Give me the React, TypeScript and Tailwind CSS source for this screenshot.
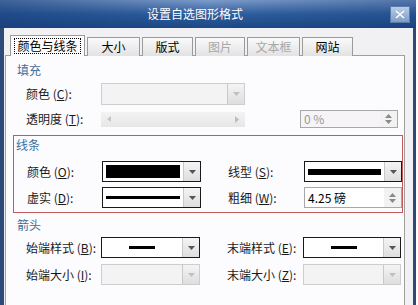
import React from 'react';

const font = { fontFamily: '"Noto Sans CJK SC", "Noto Sans", sans-serif' };

function Arrow({ disabled }: { disabled?: boolean }) {
  return (
    <div className="flex h-full w-[17px] items-center justify-center border-l border-[#c8c8c8] bg-gradient-to-b from-[#f4f4f4] to-[#dedede]">
      <svg width="7" height="4" viewBox="0 0 7 4">
        <path d="M0 0h7L3.5 4z" fill={disabled ? '#c0c0c0' : '#555'} />
      </svg>
    </div>
  );
}

function Spin() {
  return (
    <div className="flex h-full w-[17px] flex-col items-center justify-center gap-[2px] bg-[#f2f2f2]">
      <svg width="7" height="4" viewBox="0 0 7 4">
        <path d="M0 4h7L3.5 0z" fill="#8a8a8a" />
      </svg>
      <svg width="7" height="4" viewBox="0 0 7 4">
        <path d="M0 0h7L3.5 4z" fill="#8a8a8a" />
      </svg>
    </div>
  );
}

function Combo({ w, h, children, disabled }: { w: string; h: string; children?: React.ReactNode; disabled?: boolean }) {
  return (
    <div
      className={`flex ${w} ${h} items-stretch border ${
        disabled ? 'border-[#cdcdcd] bg-[#f3f3f3]' : 'border-[#1a1a1a] bg-white'
      }`}
    >
      <div className="flex flex-1 items-center px-[3px]">{children}</div>
      <Arrow disabled={disabled} />
    </div>
  );
}

function Label({ text, k, w }: { text: string; k: string; w: string }) {
  return (
    <div className={`${w} shrink-0 text-[12px] leading-[16px] text-[#1a1a1a]`}>
      {text} (<span className="underline">{k}</span>):
    </div>
  );
}

function Heading({ children }: { children: React.ReactNode }) {
  return <div className="text-[12px] leading-[16px] text-[#3d6f9c]">{children}</div>;
}

export default function App() {
  const tabs = [
    { t: '大小', w: 'w-[53px]' },
    { t: '版式', w: 'w-[51px]' },
    { t: '图片', w: 'w-[50px]', dis: true },
    { t: '文本框', w: 'w-[53px]', dis: true },
    { t: '网站', w: 'w-[51px]' },
  ];

  return (
    <div className="flex h-[305px] w-[418px] bg-white" style={font}>
      <div className="flex w-[416px] flex-col">
        {/* title bar */}
        <div className="relative flex h-[28px] shrink-0 items-center bg-gradient-to-b from-[#7d9ccb] via-[#2f5f9f] to-[#1c4886]">
          <div className="absolute inset-0 bg-gradient-to-r from-[#163c78]/60 via-transparent to-[#163c78]/40" />
          <div className="relative ml-[147px] text-[12px] leading-[16px] text-white">设置自选图形格式</div>
          <div className="relative ml-auto mr-[6px] flex h-[17px] w-[20px] items-center justify-center border border-[#5b7aa8] bg-gradient-to-b from-[#b9cde6] to-[#7e9cc6]">
            <svg width="10" height="9" viewBox="0 0 10 9">
              <path d="M1 1l8 7M9 1L1 8" stroke="white" strokeWidth="1.6" />
            </svg>
          </div>
        </div>

        <div className="flex flex-1">
          <div className="w-[4px] bg-[#2c4b78]" />
          <div className="flex flex-1 flex-col bg-[#f1f0f3] pt-[7px]">
            {/* tabs */}
            <div className="relative z-10 flex h-[21px] items-end gap-[2px] pl-[6px]">
              <div className="flex h-[21px] w-[75px] items-start justify-center border border-b-0 border-[#9a9a9a] bg-[#fcfbfd] pt-[2px]">
                <span className="border border-dotted border-black px-[2px] text-[12px] leading-[14px] text-black">
                  颜色与线条
                </span>
              </div>
              {tabs.map((tab) => (
                <div
                  key={tab.t}
                  className={`flex h-[19px] ${tab.w} items-center justify-center border border-b-0 border-[#9a9a9a] bg-gradient-to-b from-[#fafafa] to-[#e2e2e2] text-[12px] leading-[14px] ${
                    tab.dis ? 'text-[#a8a8a8]' : 'text-black'
                  }`}
                >
                  {tab.t}
                </div>
              ))}
            </div>

            {/* panel */}
            <div className="-mt-px ml-[1px] mr-[8px] flex flex-1 flex-col border border-b-0 border-[#9f9f9f] bg-[#fcfbfd] pl-[7px]">
              <div className="mt-[6px] pl-[4px]">
                <Heading>填充</Heading>
              </div>
              <div className="mt-[5px] flex items-center pl-[13px]">
                <Label text="颜色" k="C" w="w-[75px]" />
                <Combo w="w-[144px]" h="h-[22px]" disabled />
              </div>
              <div className="mt-[5px] flex items-center pl-[13px]">
                <Label text="透明度" k="T" w="w-[75px]" />
                <div className="flex h-[15px] w-[144px] items-center justify-between bg-gradient-to-b from-[#f3f3f3] to-[#e6e6e6] px-[6px]">
                  <svg width="4" height="6" viewBox="0 0 4 6">
                    <path d="M4 0v6L0 3z" fill="#c4c4c4" />
                  </svg>
                  <svg width="4" height="7" viewBox="0 0 4 7">
                    <path d="M0 0v7l4-3.5z" fill="#bdbdbd" />
                  </svg>
                </div>
                <div className="ml-[55px] flex h-[18px] w-[98px] items-stretch border border-[#a8a8a8] bg-[#f6f4f6]">
                  <div className="flex flex-1 items-center pl-[3px] text-[12px] leading-[14px] text-[#9a9a9a]">0 %</div>
                  <Spin />
                </div>
              </div>

              {/* lines group */}
              <div className="mr-[1px] mt-[7px] flex flex-col border border-[#c25a5a] pb-[4px] pl-[2px]">
                <div className="pt-[1px]">
                  <Heading>线条</Heading>
                </div>
                <div className="mt-[8px] flex items-center pl-[11px]">
                  <Label text="颜色" k="O" w="w-[75px]" />
                  <Combo w="w-[99px]" h="h-[21px]">
                    <div className="h-[13px] w-full bg-black" />
                  </Combo>
                  <Label text="线型" k="S" w="ml-[27px] w-[76px]" />
                  <Combo w="w-[98px]" h="h-[21px]">
                    <div className="h-[6px] w-full bg-black" />
                  </Combo>
                </div>
                <div className="mt-[5px] flex items-center pl-[11px]">
                  <Label text="虚实" k="D" w="w-[75px]" />
                  <Combo w="w-[99px]" h="h-[21px]">
                    <div className="h-[3px] w-full bg-black" />
                  </Combo>
                  <Label text="粗细" k="W" w="ml-[27px] w-[76px]" />
                  <div className="flex h-[21px] w-[98px] items-stretch border border-[#a8a8a8] bg-white">
                    <div className="flex flex-1 items-center pl-[3px] text-[12px] leading-[14px] text-black">4.25 磅</div>
                    <Spin />
                  </div>
                </div>
              </div>

              <div className="mt-[4px] pl-[4px]">
                <Heading>箭头</Heading>
              </div>
              <div className="mt-[4px] flex items-center pl-[13px]">
                <Label text="始端样式" k="B" w="w-[75px]" />
                <Combo w="w-[99px]" h="h-[21px]">
                  <div className="mx-auto h-[3px] w-[26px] bg-black" />
                </Combo>
                <Label text="末端样式" k="E" w="ml-[27px] w-[76px]" />
                <Combo w="w-[98px]" h="h-[21px]">
                  <div className="mx-auto h-[3px] w-[26px] bg-black" />
                </Combo>
              </div>
              <div className="mt-[6px] flex items-center pl-[13px]">
                <Label text="始端大小" k="I" w="w-[75px]" />
                <Combo w="w-[99px]" h="h-[21px]" disabled />
                <Label text="末端大小" k="Z" w="ml-[27px] w-[76px]" />
                <Combo w="w-[98px]" h="h-[21px]" disabled />
              </div>
            </div>
          </div>
          <div className="w-[3px] bg-[#2c4b78]" />
        </div>
      </div>
    </div>
  );
}
